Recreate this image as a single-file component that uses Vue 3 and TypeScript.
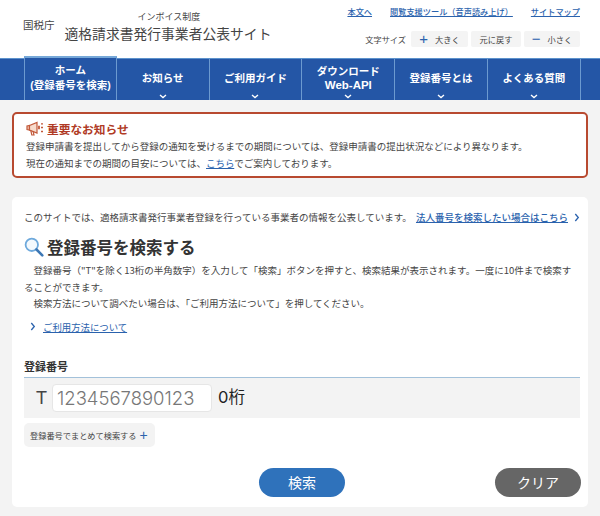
<script setup lang="ts">
interface NavItem { lines: string[]; active?: boolean }
const navItems: NavItem[] = [
  { lines: ['ホーム', '(登録番号を検索)'], active: true },
  { lines: ['お知らせ'] },
  { lines: ['ご利用ガイド'] },
  { lines: ['ダウンロード', 'Web-API'] },
  { lines: ['登録番号とは'] },
  { lines: ['よくある質問'] },
]
</script>

<template>
  <div class="page">
    <header class="head">
      <div class="brand">
        <span class="nta">国税庁</span>
        <div class="titles">
          <span class="sub">インボイス制度</span>
          <span class="title">適格請求書発行事業者公表サイト</span>
        </div>
      </div>
      <div class="tools">
        <div class="links">
          <a>本文へ</a>
          <a>閲覧支援ツール（音声読み上げ）</a>
          <a>サイトマップ</a>
        </div>
        <div class="sizes">
          <span class="size-label">文字サイズ</span>
          <span class="size-btn big"><b>+</b>大きく</span>
          <span class="size-btn reset">元に戻す</span>
          <span class="size-btn small"><b>−</b>小さく</span>
        </div>
      </div>
    </header>

    <nav class="nav">
      <div v-for="item in navItems" :key="item.lines[0]" class="nav-item" :class="{ active: item.active }">
        <div class="nav-text">
          <span v-for="l in item.lines" :key="l">{{ l }}</span>
        </div>
        <svg v-if="!item.active" class="chev" width="8" height="5" viewBox="0 0 8 5">
          <path d="M1 1l3 2.600L7 1" fill="none" stroke="#fff" stroke-width="1.300" />
        </svg>
      </div>
    </nav>

    <main class="main">
      <section class="notice">
        <h2 class="notice-title">
          <svg width="18" height="15" viewBox="0 0 18 15" fill="none" stroke="#c2593a" stroke-width="1.200">
            <path d="M1 5v3.500l2.500.500V4.500z" fill="#f3c9b4" />
            <path d="M3.500 4.500L11 1.500v10.500L3.500 9z" fill="#f7dccd" />
            <path d="M4.800 9.500l1 4.500h2.200l-1-3.800" />
            <path d="M13 4.800v3.500" stroke-width="1.800" />
            <path d="M15 2.800h2M15 6.500h2M15 10.500h2" stroke-width="1.300" />
          </svg>
          <span>重要なお知らせ</span>
        </h2>
        <p>登録申請書を提出してから登録の通知を受けるまでの期間については、登録申請書の提出状況などにより異なります。</p>
        <p>現在の通知までの期間の目安については、<a>こちら</a>でご案内しております。</p>
      </section>

      <section class="card">
        <div class="intro">
          <span>このサイトでは、適格請求書発行事業者登録を行っている事業者の情報を公表しています。</span>
          <span class="corp"><a>法人番号を検索したい場合はこちら</a>
            <svg width="6" height="9" viewBox="0 0 6 9"><path d="M1.300 1l3 3.500-3 3.500" fill="none" stroke="#2a62ad" stroke-width="1.300" /></svg>
          </span>
        </div>

        <h1 class="heading">
          <svg width="20" height="20" viewBox="0 0 20 20" fill="none">
            <circle cx="7.800" cy="7.800" r="6.200" stroke="#6ea9dc" stroke-width="1.800" fill="#f4f9fd" />
            <path d="M12.500 12.500l5.800 5.800" stroke="#3d78b5" stroke-width="2.600" stroke-linecap="round" />
          </svg>
          <span>登録番号を検索する</span>
        </h1>

        <p class="desc">　登録番号（"T"を除く13桁の半角数字）を入力して「検索」ボタンを押すと、検索結果が表示されます。一度に10件まで検索することができます。</p>
        <p class="desc">　検索方法について調べたい場合は、「ご利用方法について」を押してください。</p>

        <div class="usage">
          <svg width="6" height="9" viewBox="0 0 6 9"><path d="M1.300 1l3 3.500-3 3.500" fill="none" stroke="#2a62ad" stroke-width="1.300" /></svg>
          <a>ご利用方法について</a>
        </div>

        <div class="field-label">登録番号</div>
        <div class="field">
          <span class="t">T</span>
          <span class="input">1234567890123</span>
          <span class="count">0桁</span>
        </div>

        <button class="bulk">登録番号でまとめて検索する<b>+</b></button>

        <div class="actions">
          <button class="btn search">検索</button>
          <button class="btn clear">クリア</button>
        </div>
      </section>
    </main>
  </div>
</template>

<style>
html, body { margin: 0; background: #f3f3f3; }
</style>

<style scoped>
.page {
  width: 600px;
  height: 516px;
  overflow: hidden;
  background: #f3f3f3;
  color: #333;
  font-family: "Noto Sans CJK JP", "Liberation Sans", sans-serif;
}
a { color: #2a62ad; text-decoration: underline; }
p { margin: 0; }

.head {
  height: 58px;
  background: #fff;
  display: flex;
  justify-content: space-between;
  box-sizing: border-box;
}
.brand { display: flex; align-items: flex-start; padding: 11px 0 0 23px; }
.nta { font-size: 10.500px; line-height: 16px; margin-top: 6px; color: #444; }
.titles { display: flex; flex-direction: column; margin-left: 10px; }
.sub { font-size: 9px; line-height: 11px; margin-left: 73px; color: #444; }
.title { font-size: 13.800px; line-height: 20px; margin-top: 1px; color: #444; white-space: nowrap; }

.tools { display: flex; flex-direction: column; align-items: flex-end; padding: 5px 20px 0 0; }
.links { display: flex; gap: 18px; font-size: 8.200px; line-height: 12px; }
.links a { font-weight: 500; }
.sizes { display: flex; align-items: center; margin-top: 14px; font-size: 8.200px; }
.size-label { margin-right: 5px; color: #444; }
.size-btn {
  height: 16px;
  background: #f4f4f4;
  border-radius: 2px;
  margin-right: 3px;
  display: flex;
  align-items: center;
  justify-content: center;
  color: #444;
}
.size-btn:last-child { margin-right: 0; }
.size-btn b {
  color: #2a62ad;
  font: 400 15px/16px "Liberation Sans", sans-serif;
  margin-right: 7px;
}
.big { width: 57px; }
.reset { width: 50px; }
.small { width: 56px; }

.nav {
  height: 42px;
  background: #2456a6;
  display: flex;
  padding-left: 24px;
  border-top: 1px solid #5c92cc;
  box-sizing: border-box;
}
.nav-item {
  width: 92.800px;
  box-sizing: border-box;
  border-right: 1px solid #6c9ad0;
  position: relative;
  display: flex;
  align-items: center;
  justify-content: center;
  color: #fff;
  font-family: "Liberation Sans", "Noto Sans CJK JP", sans-serif;
  font-size: 11px;
  font-weight: 700;
  line-height: 14.500px;
  text-align: center;
}
.nav-item span { font-size: 10.500px; }
.nav-item span:last-child:not(:first-child) { font-size: 11.500px; }
.nav-item.active span:last-child { font-size: 10.500px; }
.nav-item.active {
  border-left: 1px solid #6c9ad0;
  border-top: 2px solid #76a8d8;
  margin-top: -3px;
  background: #2456a6;
}
.nav-text { display: flex; flex-direction: column; margin-top: -3px; white-space: nowrap; }
.chev { position: absolute; left: 50%; margin-left: -4px; bottom: 1px; }

.main { padding: 12px 12px 0; }
.notice {
  height: 66px;
  box-sizing: border-box;
  background: #fff;
  border: 2px solid #b84a30;
  border-radius: 5px;
  padding: 6px 12px 0;
  font-size: 9.500px;
  line-height: 16.500px;
  color: #444;
}
.notice-title {
  margin: 0 0 1px;
  display: flex;
  align-items: center;
  gap: 3px;
  color: #b03a25;
  font-size: 11.700px;
  line-height: 17px;
  font-weight: 700;
}
.notice p { white-space: nowrap; }

.card {
  margin-top: 19px;
  height: 310px;
  box-sizing: border-box;
  background: #fff;
  border-radius: 5px;
  padding: 12px 8px 0 12px;
}
.intro {
  display: flex;
  justify-content: space-between;
  align-items: center;
  font-size: 9.500px;
  line-height: 16px;
  color: #444;
  white-space: nowrap;
}
.corp { display: flex; align-items: center; gap: 6px; font-weight: 500; }
.heading {
  margin: 12px 0 0;
  display: flex;
  align-items: center;
  gap: 3px;
  font-size: 16.500px;
  line-height: 20px;
  font-weight: 700;
  color: #333;
}
.desc { font-size: 9.500px; line-height: 16.500px; color: #444; }
.heading + .desc { margin-top: 5px; }
.usage { display: flex; align-items: center; gap: 7px; margin: 8px 0 0 6px; font-size: 9.400px; line-height: 14px; }
.field-label {
  margin-top: 24px;
  font-size: 11px;
  font-weight: 700;
  line-height: 16px;
  border-bottom: 1px solid #a3c1da;
  color: #333;
  padding-bottom: 3px;
}
.field {
  height: 40px;
  background: #f3f3f3;
  display: flex;
  align-items: center;
  padding-left: 12px;
}
.t { font: 400 18px/1 "Liberation Sans", sans-serif; color: #444; }
.input {
  margin-left: 5px;
  width: 160px;
  height: 28px;
  box-sizing: border-box;
  background: #fff;
  border: 1px solid #e6e6e6;
  border-radius: 4px;
  padding-left: 4px;
  font: 300 18.500px/26px "Inter", "Liberation Sans", sans-serif;
  color: #777;
}
.count { margin-left: 6px; font: 400 16.500px/1 "Inter", "Noto Sans CJK JP", sans-serif; color: #222; }
.bulk {
  display: flex;
  align-items: center;
  margin-top: 5px;
  width: 131px;
  height: 24px;
  padding: 0 0 0 6px;
  border: 0;
  border-radius: 5px;
  background: #f3f3f3;
  font-family: inherit;
  font-size: 8.200px;
  color: #444;
}
.bulk b { color: #2a62ad; font: 400 14px/1 "Liberation Sans", sans-serif; margin-left: 3px; }
.actions {
  display: flex;
  justify-content: space-between;
  margin: 21px -1px 0 235px;
}
.btn {
  width: 86px;
  height: 29px;
  border: 0;
  border-radius: 15px;
  color: #fff;
  font-family: inherit;
  font-size: 14px;
  padding: 0;
}
.search { background: #2f72bb; }
.clear { background: #666; }
</style>
